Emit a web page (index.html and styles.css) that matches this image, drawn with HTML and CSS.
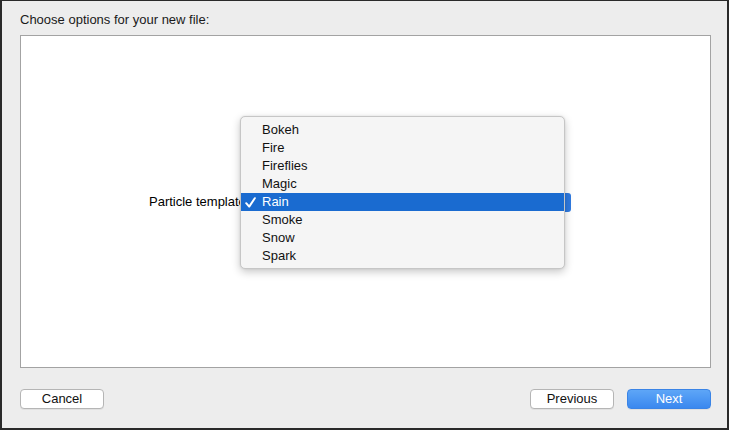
FILE: index.html
```html
<!DOCTYPE html>
<html>
<head>
<meta charset="utf-8">
<link rel="stylesheet" href="styles.css">
</head>
<body>
<div class="window">
  <div class="title">Choose options for your new file:</div>
  <div class="panel">
    <div class="row">
      <span class="label">Particle template:</span>
      <div class="popup"><span class="knob"></span></div>
    </div>
    <div class="menu">
      <div class="item">Bokeh</div>
      <div class="item">Fire</div>
      <div class="item">Fireflies</div>
      <div class="item">Magic</div>
      <div class="item selected"><svg class="check" width="11" height="11" viewBox="0 0 11 11"><path d="M1.2 6.2 L4.2 9.6 L9.8 1.2" fill="none" stroke="#fff" stroke-width="2" stroke-linecap="round" stroke-linejoin="round"/></svg>Rain</div>
      <div class="item">Smoke</div>
      <div class="item">Snow</div>
      <div class="item">Spark</div>
    </div>
  </div>
  <div class="footer">
    <button class="btn">Cancel</button>
    <div class="spacer"></div>
    <button class="btn">Previous</button>
    <button class="btn primary">Next</button>
  </div>
</div>
</body>
</html>
```

FILE: styles.css
```css
html, body {
  margin: 0;
  padding: 0;
  background: #2a2a2a;
}
body {
  font-family: "Liberation Sans", Arial, sans-serif;
  font-size: 13px;
  color: #000;
}
.window {
  box-sizing: border-box;
  width: 729px;
  height: 430px;
  background: #ededed;
  border-style: solid;
  border-color: #2a2a2a;
  border-width: 1px 2px 2px 2px;
  display: flex;
  flex-direction: column;
}
.title {
  padding: 11px 0 0 18px;
  line-height: 16px;
  height: 16px;
  color: #1a1a1a;
}
.panel {
  position: relative;
  margin: 7px 16px 0 18px;
  height: 333px;
  box-sizing: border-box;
  background: #fff;
  border: 1px solid #a3a3a3;
  display: flex;
  align-items: center;
  padding-left: 128px;
}
.row {
  display: flex;
  align-items: center;
  margin-top: 1px;
}
.label {
  line-height: 18px;
  white-space: nowrap;
}
.popup {
  width: 320px;
  height: 19px;
  margin-left: 2px;
  display: flex;
  justify-content: flex-end;
}
.knob {
  width: 7px;
  height: 19px;
  background: #2f7ae0;
  border-radius: 0 3px 3px 0;
}
.menu {
  position: absolute;
  left: 219px;
  top: 80px;
  width: 325px;
  box-sizing: border-box;
  padding: 4px 0 3px 0;
  background: #f5f5f5;
  border: 1px solid #c6c6c6;
  border-radius: 5px;
  box-shadow: 0 3px 9px rgba(0, 0, 0, 0.22), 0 0 2px rgba(0, 0, 0, 0.1);
}
.item {
  position: relative;
  height: 18px;
  line-height: 18px;
  padding-left: 21px;
  color: #111;
}
.item.selected {
  background: #1a6bd0;
  color: #fff;
}
.check {
  position: absolute;
  left: 4px;
  top: 4px;
}
.footer {
  display: flex;
  align-items: center;
  margin: 21px 16px 0 18px;
  gap: 13px;
}
.spacer {
  flex: 1;
}
.btn {
  width: 84px;
  height: 20px;
  box-sizing: border-box;
  border: 1px solid #b5b5b5;
  border-radius: 4px;
  background: #fff;
  font-family: "Liberation Sans", Arial, sans-serif;
  font-size: 13px;
  color: #111;
  padding: 0;
  line-height: 18px;
  box-shadow: 0 1px 0 rgba(0, 0, 0, 0.05);
}
.btn.primary {
  background: linear-gradient(#5ea6f7, #3a88ef);
  border-color: #3a84e6;
  color: #fff;
}
```
